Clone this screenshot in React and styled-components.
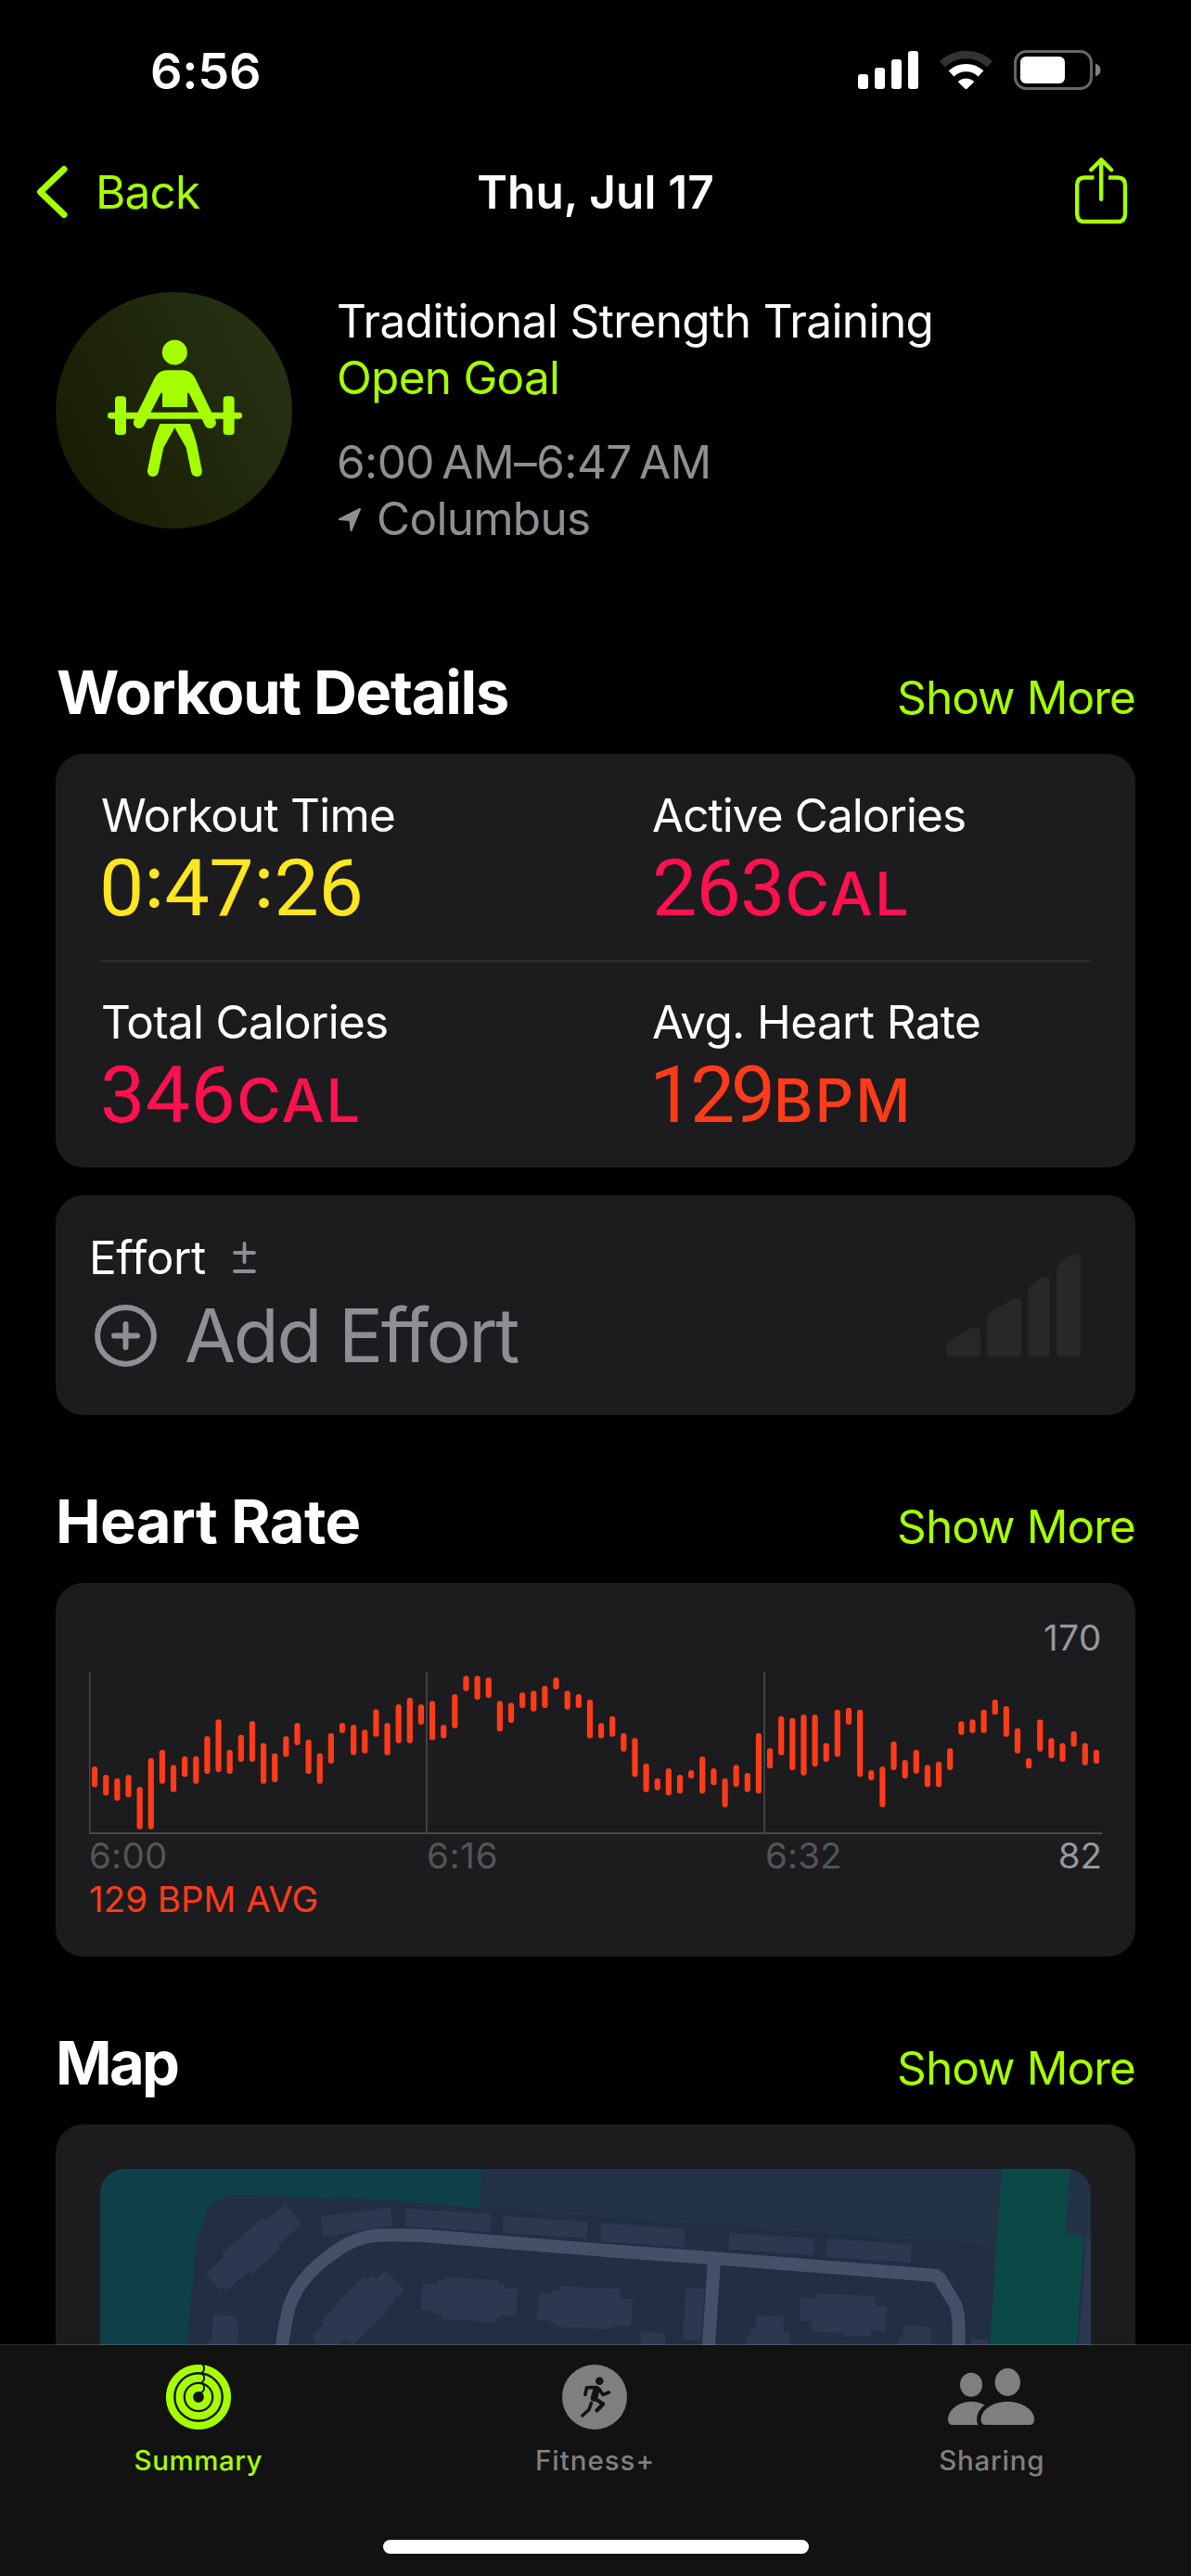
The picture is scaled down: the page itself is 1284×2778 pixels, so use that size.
import React from 'react';
import styled, { createGlobalStyle } from 'styled-components';

const GREEN = '#a6ff00';
const GREY = '#8e8e93';
const PINK = '#ff1150';
const RED = '#ff3b1a';
const YELLOW = '#ffe620';
const BAR_BG = '#121212';

const GlobalStyle = createGlobalStyle`
  * {
    box-sizing: border-box;
  }

  body {
    margin: 0;
    background: #000;
    color: #fff;
    font-family: Inter, "Liberation Sans", sans-serif;
    overflow: hidden;
  }

  svg {
    display: block;
    flex: none;
  }
`;

const Screen = styled.div`
  display: flex;
  flex-direction: column;
  width: 1284px;
  height: 2778px;
  overflow: hidden;
`;

const Scroll = styled.main`
  display: flex;
  flex-direction: column;
  flex: none;
  height: 2529px;
  overflow: hidden;
`;

const Text = styled.div`
  font-size: 49.5px;
  line-height: 61px;
  white-space: nowrap;
  color: ${(p) => p.$color || '#fff'};
  font-weight: ${(p) => p.$weight || 400};
  letter-spacing: ${(p) => p.$track || 0}px;
`;

const StatusBar = styled.div`
  display: flex;
  flex: none;
  justify-content: space-between;
  align-items: center;
  height: 140px;
  padding: 14px 96px 0 162px;
`;

const Clock = styled.div`
  font-size: 54px;
  line-height: 60px;
  font-weight: 600;
  letter-spacing: -0.24px;
`;

const StatusIcons = styled.div`
  display: flex;
  align-items: center;
  gap: 23px;
  margin-top: -3px;
`;

const NavBar = styled.nav`
  display: grid;
  grid-template-columns: 1fr auto 1fr;
  flex: none;
  align-items: center;
  height: 134px;
  padding: 0 67px 0 39px;
`;

const BackButton = styled.div`
  display: flex;
  align-items: center;
  gap: 30px;
`;

const NavTitle = styled(Text)`
  margin-left: 28px;
`;

const ShareButton = styled.div`
  justify-self: end;
  margin-top: -3px;
`;

const Summary = styled.header`
  display: flex;
  flex: none;
  gap: 48px;
  height: 434px;
  padding: 41px 60px 0;
`;

const SummaryText = styled.div`
  display: flex;
  flex-direction: column;
  padding-top: 1px;
`;

const TimeRange = styled(Text)`
  margin-top: 30px;
`;

const Place = styled.div`
  display: flex;
  align-items: center;
  gap: 17px;
  padding-left: 2px;
`;

const SectionHead = styled.div`
  display: flex;
  flex: none;
  justify-content: space-between;
  align-items: baseline;
  height: 105px;
  padding: 0 60px;
  margin-top: ${(p) => p.$top || 0}px;
`;

const Heading = styled.h2`
  margin: 0;
  padding-left: ${(p) => p.$indent || 0}px;
  font-size: 65px;
  line-height: 78px;
  font-weight: 700;
  white-space: nowrap;
  letter-spacing: ${(p) => p.$track}px;
`;

const Card = styled.section`
  flex: none;
  margin: ${(p) => p.$top || 0}px 60px 0;
  height: ${(p) => p.$height}px;
  padding: ${(p) => p.$pad};
  border-radius: 30px;
  background: #1c1c1e;
`;

const MetricRow = styled.div`
  display: grid;
  grid-template-columns: 594px 1fr;
  height: 223px;
  padding-top: 36px;

  & + & {
    padding-top: 35px;
    border-top: 1px solid #3c3c3f;
  }
`;

const MetricLabel = styled(Text)`
  padding-left: 1px;
`;

const MetricValue = styled.div`
  display: flex;
  align-items: baseline;
  margin: 2px 0 0 ${(p) => p.$shift}px;
  font-family: Roboto, Inter, sans-serif;
  font-size: 86px;
  line-height: 92px;
  color: ${(p) => p.$color};
  letter-spacing: ${(p) => p.$track}px;
`;

// the case feature lifts the colon to the middle of the digits
const Colon = styled.span`
  font-family: Inter, "Liberation Sans", sans-serif;
  font-size: 80px;
  line-height: 60px;
  font-feature-settings: "case";
`;

const Unit = styled.span`
  margin-left: ${(p) => p.$gap}px;
  font-family: Inter, "Liberation Sans", sans-serif;
  font-size: 65px;
  font-weight: 500;
  letter-spacing: 2px;
`;

const EffortCard = styled(Card)`
  display: flex;
  justify-content: space-between;
`;

const EffortTitle = styled.div`
  display: flex;
  align-items: center;
  gap: 29px;
`;

const AddEffort = styled.div`
  display: flex;
  align-items: center;
  gap: 30px;
  margin-top: 8px;
  padding-left: 6px;
  font-size: 80px;
  line-height: 90px;
  color: ${GREY};
  letter-spacing: -2.4px;
  white-space: nowrap;
`;

const EffortBars = styled.div`
  margin-top: 26px;
`;

const ChartText = styled.div`
  font-size: 38.5px;
  line-height: 46px;
  white-space: nowrap;
  color: ${(p) => p.$color};
  letter-spacing: ${(p) => p.$track || 0}px;
  text-align: ${(p) => p.$align || 'left'};
`;

const ChartPeak = styled(ChartText)`
  margin-bottom: 14px;
`;

const ChartAxis = styled.div`
  display: grid;
  grid-template-columns: 364px 365px 1fr auto;
  margin: -1px 0 1px;
`;

const MapFrame = styled.div`
  border-radius: 26px;
  overflow: hidden;
`;

const TabBar = styled.footer`
  position: relative;
  display: flex;
  flex-direction: column;
  flex: 1;
  align-items: center;
  background: ${BAR_BG};
  box-shadow: 0 -1px 0 rgba(255, 255, 255, 0.17);
`;

const Tabs = styled.div`
  display: grid;
  grid-template-columns: repeat(3, 1fr);
  width: 100%;
  padding: 21px 1px 0 0;
`;

const Tab = styled.div`
  display: flex;
  flex-direction: column;
  align-items: center;
  gap: 15px;
  color: ${(p) => (p.$active ? GREEN : '#7f7f7f')};
`;

const TabLabel = styled.div`
  font-size: 29.5px;
  line-height: 36px;
  font-weight: 500;
  letter-spacing: ${(p) => p.$track}px;
`;

const HomeIndicator = styled.div`
  width: 459px;
  height: 15px;
  margin-top: 68px;
  border-radius: 8px;
  background: #fff;
`;

// top and bottom edge of every heart rate bar, in thirds of a pixel
const heartRate = [
  [495, 562], [522, 589], [533, 606], [522, 595], [561, 698], [468, 698], [441, 551], [490, 578], [462, 529],
  [462, 551], [397, 519], [343, 513], [441, 519], [392, 480], [348, 480], [419, 551], [452, 546], [397, 464],
  [354, 426], [408, 519], [452, 551], [387, 486], [354, 387], [360, 458], [376, 453], [310, 399], [354, 459],
  [294, 420], [273, 420], [294, 360], [283, 410], [360, 404], [261, 371], [202, 251], [202, 279], [207, 273],
  [283, 382], [289, 354], [256, 306], [250, 317], [234, 306], [207, 246], [250, 311], [261, 306], [278, 404],
  [354, 404], [332, 399], [387, 447], [403, 529], [485, 578], [533, 572], [501, 589], [522, 583], [507, 534],
  [463, 583], [501, 556], [533, 627], [490, 561], [516, 578], [387, 583], [436, 502], [332, 459], [338, 507],
  [327, 524], [327, 496], [419, 480], [311, 464], [305, 360], [311, 529], [507, 540], [495, 627], [414, 507],
  [474, 534], [441, 518], [490, 562], [479, 562], [436, 507], [349, 393], [343, 387], [311, 387], [278, 328],
  [300, 399], [371, 453], [468, 502], [343, 447], [403, 469], [419, 480], [381, 431], [419, 491], [441, 486],
];

const metrics = [
  [
    { label: 'Workout Time', value: '0:47:26', color: YELLOW, track: -0.8, valueTrack: -0.5, shift: -1 },
    { label: 'Active Calories', value: '263', unit: 'CAL', color: PINK, track: -0.94, valueTrack: -0.8, shift: 1, gap: 1 },
  ],
  [
    { label: 'Total Calories', value: '346', unit: 'CAL', color: PINK, track: -0.75, valueTrack: 0.4, shift: 0, gap: 1 },
    { label: 'Avg. Heart Rate', value: '129', unit: 'BPM', color: RED, track: -0.63, valueTrack: -4.4, shift: -2, gap: 2 },
  ],
];

const SignalIcon = () => (
  <svg width="65" height="43" viewBox="0 0 65 43" fill="#fff">
    <rect x="0" y="26" width="11" height="16" rx="3" />
    <rect x="18" y="19" width="11" height="23" rx="3" />
    <rect x="36" y="10" width="11" height="32" rx="3" />
    <rect x="54" y="1" width="11" height="41" rx="3" />
  </svg>
);

const WifiIcon = () => (
  <svg width="57" height="43" viewBox="0 0 57 43" fill="none" strokeWidth="8.4">
    <path d="M2.8 15.2a37.6 37.6 0 0 1 51.4 0" stroke="#333" />
    <path d="M12.5 25.4a23.4 23.4 0 0 1 32 0" stroke="#fff" />
    <path d="M20.5 33.2a13.4 13.4 0 0 1 16 0q.9.9 0 1.7l-7 6.8q-1 .8-2 0l-7-6.8q-.9-.9 0-1.7z" fill="#fff" stroke="none" />
  </svg>
);

const BatteryIcon = () => (
  <svg width="95" height="43" viewBox="0 0 95 43">
    <rect x="1.5" y="1.5" width="82" height="40" rx="12" fill="none" stroke="#666" strokeWidth="3" />
    <rect x="7" y="7" width="48" height="29" rx="6" fill="#fff" />
    <path d="M88 14.5q5.5 2 5.5 7t-5.5 7z" fill="#808080" />
  </svg>
);

const ChevronIcon = () => (
  <svg width="34" height="58" viewBox="0 0 34 58" fill="none" stroke={GREEN} strokeWidth="7" strokeLinecap="round" strokeLinejoin="round">
    <path d="M30 4.5L4.5 29 30 53.5" />
  </svg>
);

const ShareIcon = () => (
  <svg width="59" height="73" viewBox="0 0 59 73" fill="none" stroke={GREEN} strokeWidth="4.4">
    <path d="M21.5 22.5H11Q3.2 22.5 3.2 31v30.5q0 8.5 7.8 8.5h36.2q7.8 0 7.8-8.5V31q0-8.5-7.8-8.5H37" />
    <path d="M29.2 3.5v42.2M18.2 14.2l11-11 11 11" strokeLinecap="round" strokeLinejoin="round" />
  </svg>
);

const LifterBadge = () => (
  <svg width="255" height="255" viewBox="60 75 765 765">
    <defs>
      <linearGradient id="badge" x1="0" y1="0.75" x2="1" y2="0.25">
        <stop offset="0" stopColor="#181c03" />
        <stop offset="1" stopColor="#263214" />
      </linearGradient>
    </defs>
    <circle cx="442.5" cy="457.5" r="382.5" fill="url(#badge)" />
    <g fill={GREEN}>
      <circle cx="445" cy="270" r="40.5" />
      <path d="M420 328h51q26 0 40 25l64 132q6 13 2 20-10 17-28 8-4-3-7-9L491 401h-5v46h-81v-46h-5l-53 103q-3 6-7 9-18 9-27-8-4-7 2-20l65-132q14-25 40-25z" />
      <rect x="228" y="464" width="435" height="21" rx="10" />
      <rect x="252" y="412" width="36" height="125" rx="11" />
      <rect x="602" y="412" width="36" height="125" rx="11" />
      <path d="M397 501h97q14 34 22 64l17 86q2 20-16 21-16 0-19-17l-16-77-37-64-36 64-16 77q-3 17-20 17-17-2-16-21l18-86q8-30 22-64z" />
    </g>
  </svg>
);

const LocationIcon = () => (
  <svg width="24" height="26" viewBox="0 0 24 26" fill={GREY} stroke={GREY} strokeWidth="2" strokeLinejoin="round">
    <path d="M1 13L23 2l-9.5 23-1-11z" />
  </svg>
);

const PlusMinusIcon = () => (
  <svg width="25" height="35" viewBox="0 0 25 35" fill="none" stroke={GREY} strokeWidth="3.8" strokeLinecap="round">
    <path d="M12.5 2v20M2 12h21M2 32h21" />
  </svg>
);

const AddIcon = () => (
  <svg width="67" height="67" viewBox="0 0 67 67" fill="none" stroke={GREY} strokeWidth="6" strokeLinecap="round">
    <circle cx="33.5" cy="33.5" r="30.4" />
    <path d="M33.5 21v25M21 33.5h25" />
  </svg>
);

const EffortIcon = () => (
  <svg width="146" height="112" viewBox="0 0 146 112" fill="#28282a">
    <path d="M4 95L28 80q10-4 10 5v22q0 4-4 4H5q-4 0-4-5v-5q0-4 3-6z" />
    <path d="M48 64L72 49q10-4 10 4v54q0 4-4 4H49q-4 0-4-4V70q0-4 3-6z" />
    <path d="M92 35l11-9q10-4 10 5v76q0 4-4 4H93q-4 0-4-4V42q0-4 3-7z" />
    <path d="M123 11l11-9q12-5 12 6v99q0 4-4 4h-18q-4 0-4-4V18q0-4 3-7z" />
  </svg>
);

const HeartChart = () => (
  <svg width="1092" height="176" viewBox="0 0 1092 176">
    <path d="M.5 0v174M364 0v174M728 0v174" stroke="#48484a" strokeWidth="1.8" />
    <path d="M0 174h1092" stroke="#48484a" strokeWidth="2" />
    {heartRate.map(([top, bottom], i) => (
      <rect key={i} x={3 + i * 12.133} y={top / 3 - 63} width="6.2" height={(bottom - top) / 3} rx="3" fill={RED} />
    ))}
  </svg>
);

const NeighbourhoodMap = () => (
  <svg width="1068" height="400" viewBox="0 0 1068 400">
    <rect width="1068" height="400" fill="#222f42" />
    <path d="M400 0H1068V90L966 83 532 51 400 42z" fill="#243248" />
    <path d="M0 0h412l-3 42-91-7-41-3-76-2-32-2h-31l-23 16-12 40-9 105-8 211H0z" fill="#0f3f48" />
    <path d="M972 0h74l-6 70 21 2-8 117-9 211h-98l13-211z" fill="#0b4848" />
    <path d="M1063 73h5v327h-22l9-211z" fill="#2b3850" />
    <g fill="#2b3850" transform="translate(-68 -169) scale(0.40816 0.33333)">
      <path d="M656 622l43 63-63 70 5 12-75 81-8-8-59 62-7-10-9 8-37-53 49-55-7-12 108-114 8 9z" />
      <path d="M749 660l185-28 4 57-183 38z" />
      <path d="M975 635l223 18-1 58-224-18z" />
      <path d="M1232 660l223 19-2 53-223-19z" />
      <path d="M465 978l60 5v9l8 3-3 72 4 10v100h-83v-113h9z" />
      <path d="M920 834l50 62-29 36v10l-15 16v10l-92 108-18-18-60 60-30-78 30-28-6-13 112-145 10 11 10-14 12 12z" />
      <path d="M1077 857l141 9v12l17 2v12l34 3-5 88-38-1v9l-17-1-1 14-141-12v-15l-19-1v-9l-35-4 5-84 39 1v-13l20 1z" />
      <path d="M1378 884l162 12v30l34 2-6 87-43-3v8l-18-1-1 7-136-9v-12l-16-1v-6l-34-2 5-88 36 2v-11l18 1z" />
    </g>
    <g fill="#2b3850" transform="translate(532 -169) scale(0.41071 0.33333)">
      <path d="M20 681l220 21-2 58-221-19z" />
      <path d="M357 714l223 19-3 53-223-19z" />
      <path d="M613 732l222 20-3 59-222-19z" />
      <path d="M-10 890l78 5v30l34 2-4 87-44-3v8l-18-1v7l-46-2z" />
      <path d="M242 890l49 4-8 168-49-3z" />
      <path d="M124 1036l59 3v9l6 2v100h-67z" />
      <path d="M427 981l72 4-1 48 16 1v120H403v-106h9v-25h14z" />
      <path d="M584 909l155 8v33l30 2-3 80-39-1v16l-24-1v5l-48-4v-9l-83-4v-34l-30-1 1-77 41 2z" />
      <path d="M813 1014l72 4-1 53 10 1v90h-94v-106h11z" />
      <path d="M990 1055l45 4v90h-48z" />
    </g>
    <g fill="none" stroke="#435067" strokeWidth="14">
      <path d="M190 260L196 190Q200 164 203 151C212 120 236 101 258 86Q278 73 300 71.5C320 71 342 71 361 73L552 88.5 655 95.7 901 115 905 118 922 146Q925 154 925.5 168V400" strokeLinejoin="round" />
      <path d="M662 98L656 190 646 400" />
    </g>
  </svg>
);

const RingsIcon = () => (
  <svg width="70" height="70" viewBox="-35 -35 70 70" fill="none">
    {[31, 20.4, 10].map((r) => (
      <g key={r}>
        <circle r={r} stroke={GREEN} strokeWidth="8.2" />
        <path d={`M2.5 ${-r - 5.5}a6 6 0 0 1 0 11`} stroke={BAR_BG} strokeWidth="1.9" />
      </g>
    ))}
  </svg>
);

const RunnerIcon = () => (
  <svg width="70" height="70" viewBox="-35 -35 70 70">
    <circle r="35" fill="currentColor" />
    <circle cx="5.3" cy="-17.2" r="4.3" fill={BAR_BG} />
    <g fill="none" stroke={BAR_BG} strokeWidth="3.6" strokeLinecap="round" strokeLinejoin="round">
      <path d="M-10-2.5L-8.5-10.2 2-10.5 5-8.5 9-2.5 15.5-5" />
      <path d="M2-8L-.5 1" strokeWidth="7.5" />
      <path d="M0 1.5L9.2 7.5 2.5 14.5" strokeWidth="4.2" />
      <path d="M-3.5 6.5L-6 13.5-13 20" />
    </g>
  </svg>
);

const PeopleIcon = () => (
  <svg width="94" height="70" viewBox="0 -3 94 70" fill="currentColor">
    <ellipse cx="25" cy="18.7" rx="12" ry="13" />
    <ellipse cx="64.3" cy="16" rx="13.7" ry="15" />
    <path d="M0 56C0 47 10 37 25 37s25 10 25 19q0 6-5 6H5q-5 0-5-6z" />
    <path
      d="M35.5 56C35.5 47 47 37 64.3 37S93 47 93 56q0 6-5 6H40.5q-5 0-5-6z"
      stroke={BAR_BG}
      strokeWidth="9"
      paintOrder="stroke"
    />
  </svg>
);

const Section = ({ title, track, top, indent }) => (
  <SectionHead $top={top}>
    <Heading $track={track} $indent={indent}>{title}</Heading>
    <Text $color={GREEN} $track={-0.93}>Show More</Text>
  </SectionHead>
);

const Metric = ({ label, value, unit, color, track, valueTrack, shift, gap }) => (
  <div>
    <MetricLabel $track={track}>{label}</MetricLabel>
    <MetricValue $color={color} $track={valueTrack} $shift={shift}>
      <span>
        {value.split(':').map((part, i) => (
          <React.Fragment key={i}>
            {i > 0 && <Colon>:</Colon>}
            {part}
          </React.Fragment>
        ))}
      </span>
      {unit && <Unit $gap={gap}>{unit}</Unit>}
    </MetricValue>
  </div>
);

export default function App() {
  return (
    <Screen>
      <GlobalStyle />
      <Scroll>
        <StatusBar>
          <Clock>6:56</Clock>
          <StatusIcons>
            <SignalIcon />
            <WifiIcon />
            <BatteryIcon />
          </StatusIcons>
        </StatusBar>

        <NavBar>
          <BackButton>
            <ChevronIcon />
            <Text $color={GREEN} $track={-0.82}>Back</Text>
          </BackButton>
          <NavTitle $weight={600} $track={0.11}>Thu, Jul 17</NavTitle>
          <ShareButton>
            <ShareIcon />
          </ShareButton>
        </NavBar>

        <Summary>
          <LifterBadge />
          <SummaryText>
            <Text $track={-0.6}>Traditional Strength Training</Text>
            <Text $color={GREEN} $track={-0.75}>Open Goal</Text>
            <TimeRange $color={GREY} $track={-0.61}>{'6:00\u2009AM–6:47\u2009AM'}</TimeRange>
            <Place>
              <LocationIcon />
              <Text $color={GREY} $track={-0.72}>Columbus</Text>
            </Place>
          </SummaryText>
        </Summary>

        <Section title="Workout Details" track={-1.3} indent={1} />
        <Card $height={446} $pad="0 48px">
          {metrics.map((row) => (
            <MetricRow key={row[0].label}>
              {row.map((metric) => <Metric key={metric.label} {...metric} />)}
            </MetricRow>
          ))}
        </Card>

        <EffortCard $top={30} $height={237} $pad="37px 59px 0 36px">
          <div>
            <EffortTitle>
              <Text $track={-0.4}>Effort</Text>
              <PlusMinusIcon />
            </EffortTitle>
            <AddEffort>
              <AddIcon />
              <span>Add Effort</span>
            </AddEffort>
          </div>
          <EffortBars>
            <EffortIcon />
          </EffortBars>
        </EffortCard>

        <Section title="Heart Rate" track={-0.6} top={76} />
        <Card $height={403} $pad="36px">
          <ChartPeak $color="#98989f" $track={0.6} $align="right">170</ChartPeak>
          <HeartChart />
          <ChartAxis>
            <ChartText $color="#545456" $track={0.25}>6:00</ChartText>
            <ChartText $color="#545456" $track={0.7}>6:16</ChartText>
            <ChartText $color="#545456" $track={0.1}>6:32</ChartText>
            <ChartText $color="#98989f">82</ChartText>
          </ChartAxis>
          <ChartText $color={RED}>129 BPM AVG</ChartText>
        </Card>

        <Section title="Map" track={-2.6} top={76} />
        <Card $height={496} $pad="48px">
          <MapFrame>
            <NeighbourhoodMap />
          </MapFrame>
        </Card>
      </Scroll>

      <TabBar>
        <Tabs>
          <Tab $active>
            <RingsIcon />
            <TabLabel $track={0.53}>Summary</TabLabel>
          </Tab>
          <Tab>
            <RunnerIcon />
            <TabLabel $track={0.97}>Fitness+</TabLabel>
          </Tab>
          <Tab>
            <PeopleIcon />
            <TabLabel $track={0.75}>Sharing</TabLabel>
          </Tab>
        </Tabs>
        <HomeIndicator />
      </TabBar>
    </Screen>
  );
}
